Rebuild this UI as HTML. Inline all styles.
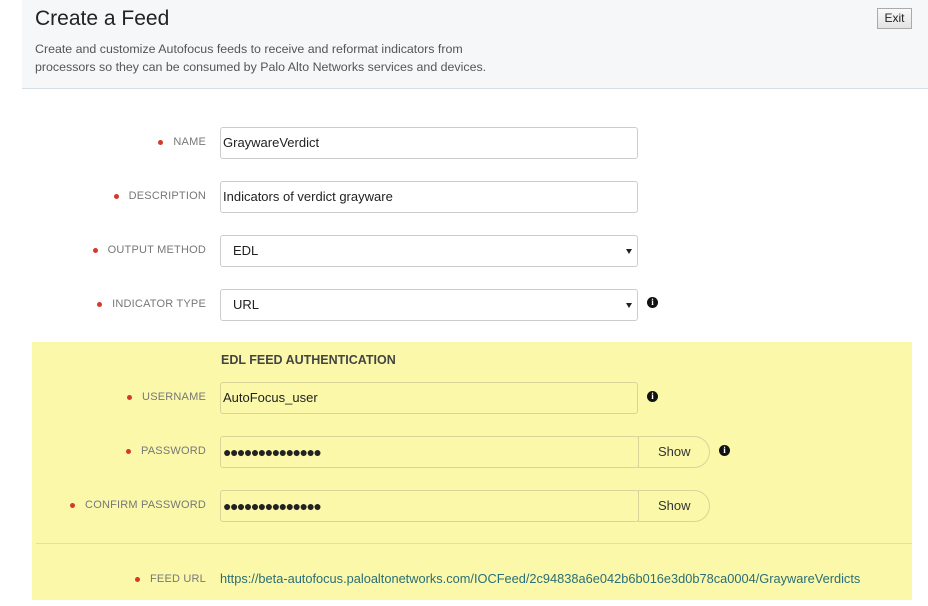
<!DOCTYPE html>
<html><head><meta charset="utf-8"><style>
*{box-sizing:border-box;margin:0;padding:0}
body{width:928px;height:606px;background:#fff;font-family:"Liberation Sans",sans-serif;position:relative;overflow:hidden;color:#333}
.hdr{position:absolute;left:22px;top:0;width:906px;height:89px;background:#f5f7f9;border-bottom:1px solid #d6dde3}
.hdr h1{position:absolute;left:13px;top:7px;font-weight:normal;font-size:21px;color:#222}
.hdr p{position:absolute;left:13px;top:40px;font-size:12.4px;line-height:18px;color:#555}
.exit{position:absolute;left:877px;top:8px;width:35px;height:21px;border:1px solid #aaa;background:linear-gradient(#fafafa,#e3e3e3);font-size:12px;text-align:center;line-height:19px;color:#222}
.yel{position:absolute;left:32px;top:342px;width:880px;height:258px;background:#fbf8aa}
.div{position:absolute;left:36px;top:543px;width:876px;height:1px;background:#e4e1a0}
.lbl{position:absolute;right:722px;font-size:11px;color:#777;letter-spacing:.2px;white-space:nowrap}
.lbl:before{content:"";position:absolute;left:-15px;top:4px;width:5px;height:5px;border-radius:50%;background:#d33a2c}
.in{position:absolute;left:220px;width:418px;height:32px;border:1px solid #ccc;border-radius:3px;background:#fff;font-size:13px;padding-left:2px;line-height:30px;color:#222}
.yel2 .in{background:#fbf8aa;border-color:#d8d59a}
.sel:after{content:"";position:absolute;right:5px;top:13px;border-left:3px solid transparent;border-right:3px solid transparent;border-top:5px solid #222}
.info{position:absolute;width:11px;height:11px;border-radius:50%;background:#111;color:#fff;font:bold 9px/11px "Liberation Serif",serif;text-align:center}
.show{position:absolute;left:638px;width:72px;height:32px;border:1px solid #d8d59a;border-radius:0 16px 16px 0;background:#fbf8aa;font-size:13px;line-height:30px;padding-left:19px;color:#333}
.dots{font-size:14px;letter-spacing:-1.5px;font-weight:bold}
a{position:absolute;left:220px;top:571px;font-size:12.8px;color:#2b6e75;text-decoration:none}
</style></head><body>
<div class="hdr"><h1>Create a Feed</h1><p>Create and customize Autofocus feeds to receive and reformat indicators from<br>processors so they can be consumed by Palo Alto Networks services and devices.</p></div>
<div class="exit">Exit</div>

<div class="lbl" style="top:136px">NAME</div>
<div class="in" style="top:127px">GraywareVerdict</div>
<div class="lbl" style="top:190px">DESCRIPTION</div>
<div class="in" style="top:181px">Indicators of verdict grayware</div>
<div class="lbl" style="top:244px">OUTPUT METHOD</div>
<div class="in sel" style="top:235px;padding-left:12px">EDL</div>
<div class="lbl" style="top:298px">INDICATOR TYPE</div>
<div class="in sel" style="top:289px;padding-left:12px">URL</div>
<div class="info" style="left:647px;top:297px">i</div>

<div class="yel"></div>
<div class="div"></div>
<div class="yel2">
<div style="position:absolute;left:221px;top:353px;font-size:12.5px;font-weight:bold;color:#444">EDL FEED AUTHENTICATION</div>
<div class="lbl" style="top:391px">USERNAME</div>
<div class="in" style="top:382px">AutoFocus_user</div>
<div class="info" style="left:647px;top:391px">i</div>
<div class="lbl" style="top:445px">PASSWORD</div>
<div class="in dots" style="top:436px;width:419px">●●●●●●●●●●●●●●</div>
<div class="show" style="top:436px">Show</div>
<div class="info" style="left:719px;top:445px">i</div>
<div class="lbl" style="top:499px">CONFIRM PASSWORD</div>
<div class="in dots" style="top:490px;width:419px">●●●●●●●●●●●●●●</div>
<div class="show" style="top:490px">Show</div>
<div class="lbl" style="top:573px">FEED URL</div>
</div>
<a>https://beta-autofocus.paloaltonetworks.com/IOCFeed/2c94838a6e042b6b016e3d0b78ca0004/GraywareVerdicts</a>
</body></html>
